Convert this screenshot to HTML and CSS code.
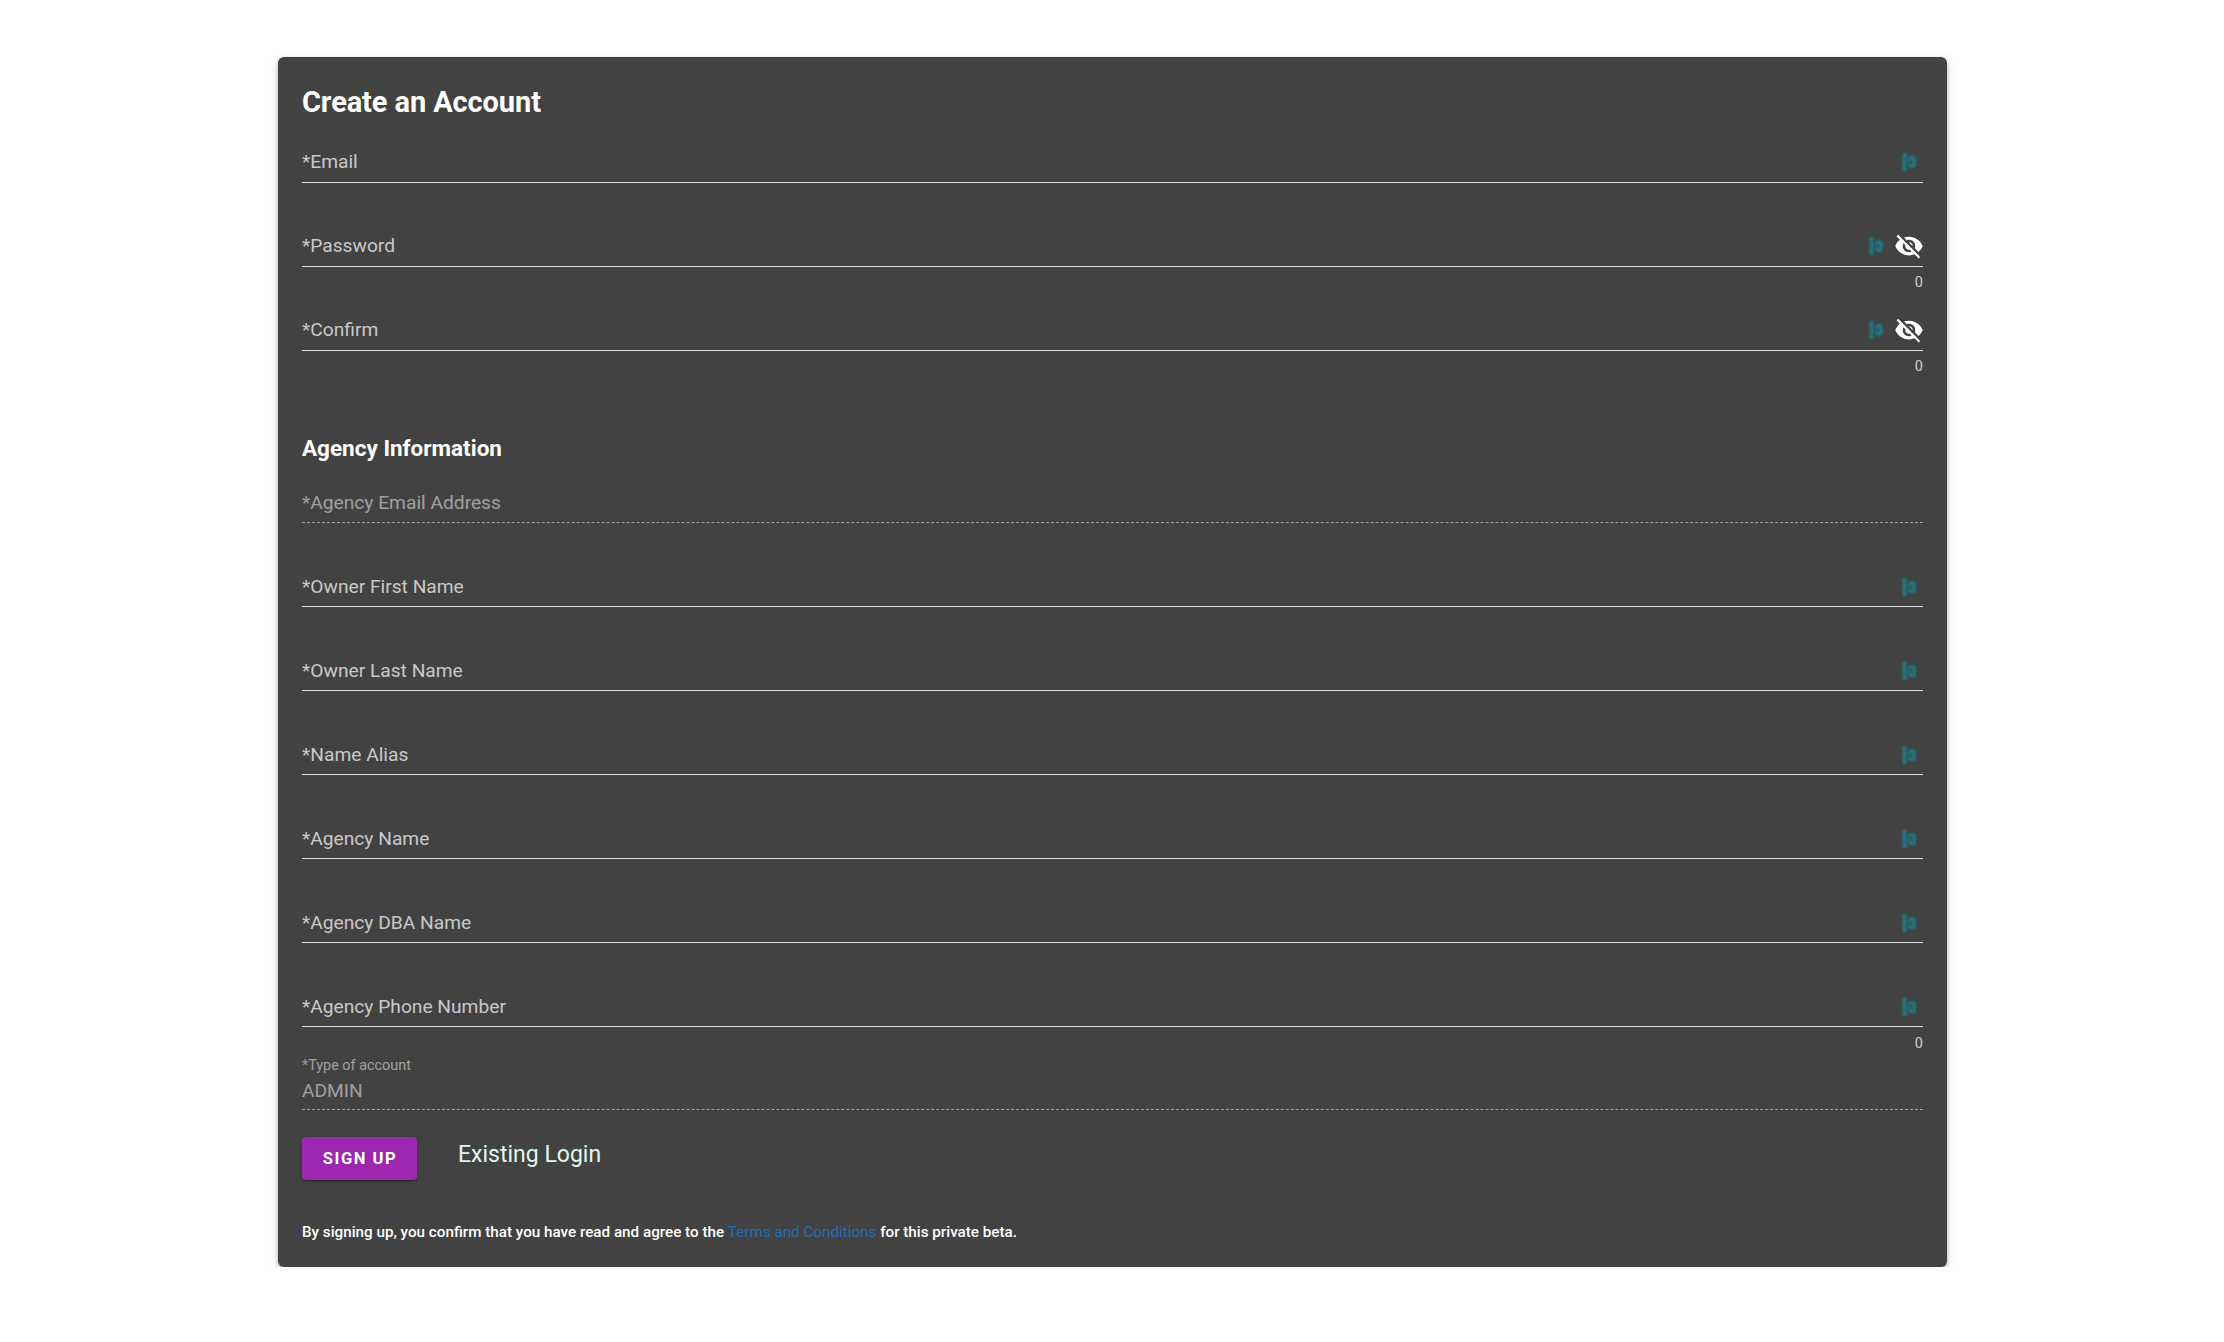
FILE: index.html
```html
<!DOCTYPE html>
<html lang="en">
<head>
<meta charset="utf-8">
<title>Create an Account</title>
<link rel="stylesheet" href="styles.css">
</head>
<body>
<svg class="defs" width="0" height="0" aria-hidden="true">
  <defs>
    <filter id="soft" x="-40%" y="-40%" width="180%" height="180%"><feGaussianBlur stdDeviation="1"/></filter>
    <symbol id="ext" viewBox="0 0 16 20">
      <g filter="url(#soft)" opacity="0.75">
        <rect x="1.5" y="1" width="4" height="18" fill="#128a9a"/>
        <rect x="7" y="4" width="8" height="12" rx="3" fill="#128a9a"/>
        <rect x="8.5" y="7.5" width="3" height="5" fill="#3d4c50"/>
      </g>
    </symbol>
    <symbol id="eye" viewBox="0 0 24 24">
      <path fill="#fff" d="M12 7c2.76 0 5 2.24 5 5 0 .65-.13 1.26-.36 1.83l2.92 2.92c1.51-1.26 2.7-2.89 3.43-4.75-1.73-4.39-6-7.5-11-7.5-1.4 0-2.74.25-3.98.7l2.16 2.16C10.74 7.13 11.35 7 12 7zM2 4.27l2.28 2.28.46.46C3.08 8.3 1.78 10.02 1 12c1.73 4.39 6 7.5 11 7.5 1.55 0 3.03-.3 4.38-.84l.42.42L19.73 22 21 20.73 3.27 3 2 4.27zM7.53 9.8l1.55 1.55c-.05.21-.08.43-.08.65 0 1.66 1.34 3 3 3 .22 0 .44-.03.65-.08l1.55 1.55c-.67.33-1.41.53-2.2.53-2.76 0-5-2.24-5-5 0-.79.2-1.53.53-2.2zm4.31-.78l3.15 3.15.02-.16c0-1.66-1.34-3-3-3l-.17.01z"/>
    </symbol>
  </defs>
</svg>
<main class="card">
  <h1 class="title">Create an Account</h1>

  <div class="field">
    <div class="control"><span class="label">*Email</span><svg class="ext"><use href="#ext"/></svg></div>
  </div>
  <div class="field">
    <div class="control"><span class="label">*Password</span><svg class="ext"><use href="#ext"/></svg><svg class="eye"><use href="#eye"/></svg></div>
    <div class="helper">0</div>
  </div>
  <div class="field">
    <div class="control"><span class="label">*Confirm</span><svg class="ext"><use href="#ext"/></svg><svg class="eye"><use href="#eye"/></svg></div>
    <div class="helper">0</div>
  </div>

  <h2 class="subtitle">Agency Information</h2>

  <section class="agency">
    <div class="field">
      <div class="control disabled"><span class="label">*Agency Email Address</span></div>
    </div>
    <div class="field">
      <div class="control"><span class="label">*Owner First Name</span><svg class="ext"><use href="#ext"/></svg></div>
    </div>
    <div class="field">
      <div class="control"><span class="label">*Owner Last Name</span><svg class="ext"><use href="#ext"/></svg></div>
    </div>
    <div class="field">
      <div class="control"><span class="label">*Name Alias</span><svg class="ext"><use href="#ext"/></svg></div>
    </div>
    <div class="field">
      <div class="control"><span class="label">*Agency Name</span><svg class="ext"><use href="#ext"/></svg></div>
    </div>
    <div class="field">
      <div class="control"><span class="label">*Agency DBA Name</span><svg class="ext"><use href="#ext"/></svg></div>
    </div>
    <div class="field">
      <div class="control"><span class="label">*Agency Phone Number</span><svg class="ext"><use href="#ext"/></svg></div>
      <div class="helper">0</div>
    </div>
  </section>

  <div class="select">
    <div class="small-label">*Type of account</div>
    <div class="control disabled"><span class="label">ADMIN</span></div>
  </div>

  <div class="actions">
    <button class="signup" type="button">Sign Up</button>
    <a class="login">Existing Login</a>
  </div>

  <p class="legal">By signing up, you confirm that you have read and agree to the <a class="terms">Terms and Conditions</a> for this private beta.</p>
</main>
</body>
</html>
```
FILE: styles.css
```css
* { box-sizing: border-box; }
html, body { margin: 0; background: #fff; }
body { font-family: Roboto, "Liberation Sans", sans-serif; }
.defs { position: absolute; }
.card {
  width: 1669px;
  height: 1210px;
  margin: 57px 0 0 278px;
  padding: 25px 24px 24px;
  background: #424242;
  border-radius: 6px;
  box-shadow: 0 2px 4px -1px rgba(0,0,0,.2), 0 4px 5px 0 rgba(0,0,0,.14), 0 1px 10px 0 rgba(0,0,0,.12);
  color: #fff;
}
.title { margin: 0 0 15px; font-size: 29px; line-height: 40px; font-weight: 700; letter-spacing: -0.1px; }
.subtitle { margin: 43px 0 13px; font-size: 22.5px; line-height: 32px; font-weight: 700; }
.field { height: 84px; }
.control {
  display: flex;
  align-items: center;
  height: 46px;
  padding-top: 4px;
  border-bottom: 1px solid #e0e0e0;
  font-size: 19.2px;
}
.agency .control { padding-top: 6px; }
.label { flex: 1; color: rgba(255,255,255,.72); }
.control.disabled { border-bottom: 1px dashed rgba(255,255,255,.5); }
.control.disabled .label { color: rgba(255,255,255,.5); }
.ext { width: 16px; height: 20px; flex: none; margin-right: 6px; }
.eye { width: 30px; height: 30px; flex: none; margin: 0 -1px 0 4px; }
.helper { margin-top: 8px; font-size: 14.5px; line-height: 16px; text-align: right; color: rgba(255,255,255,.75); }
.agency .helper { margin-top: 9px; }
.select { margin-top: -9px; }
.small-label { height: 20px; font-size: 14.4px; line-height: 20px; color: rgba(255,255,255,.5); }
.select .control { height: 34px; padding: 0 0 5px; }
.actions { display: flex; align-items: flex-start; margin-top: 27px; }
.signup {
  width: 115px;
  height: 43px;
  padding: 0 0 1px 1px;
  border: 0;
  border-radius: 4px;
  background: #9c27b0;
  color: #fff;
  font: 700 16.6px Roboto, sans-serif;
  letter-spacing: 1.5px;
  text-transform: uppercase;
  box-shadow: 0 3px 1px -2px rgba(0,0,0,.2), 0 2px 2px 0 rgba(0,0,0,.14), 0 1px 5px 0 rgba(0,0,0,.12);
}
.login { margin-left: 41px; font-size: 23px; line-height: 36px; color: #e0f7f0; }
.legal { margin: 42px 0 0; font-size: 15.23px; line-height: 20px; font-weight: 500; }
.terms { color: #1f6fb5; font-weight: 400; }
```
